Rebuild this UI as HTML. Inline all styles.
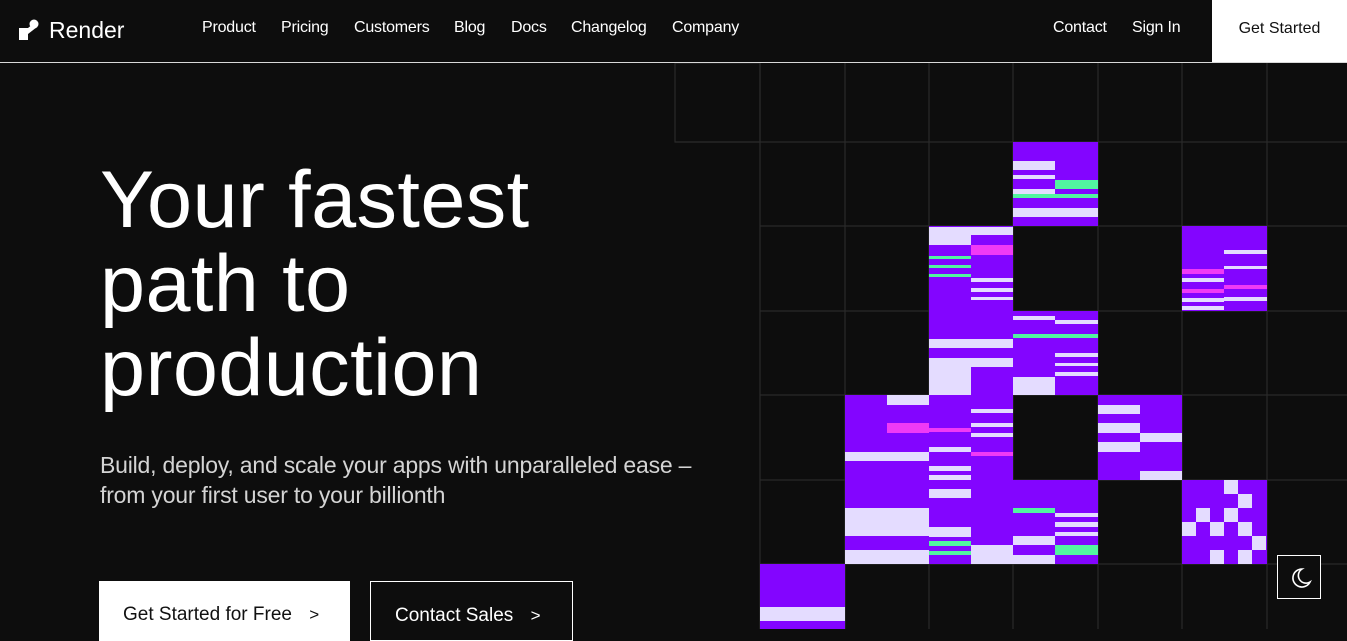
<!DOCTYPE html>
<html><head><meta charset="utf-8"><style>
*{margin:0;padding:0;box-sizing:border-box}
html,body{width:1347px;height:629px;overflow:hidden;background:#0d0d0d;font-family:"Liberation Sans",sans-serif;color:#fff}
.nav{position:absolute;left:0;top:0;width:1347px;height:63px;border-bottom:1px solid #d8d8d8;background:#0d0d0d;z-index:3}
.nav a{position:absolute;top:19px;font-size:16px;color:#fff;text-decoration:none;letter-spacing:-0.2px}
.logo{position:absolute;left:19px;top:17px;font-size:23px}
.gs{position:absolute;left:1212px;top:0;width:135px;height:62px;background:#fff;color:#111;font-size:16px;text-align:center;line-height:57px}
h1{position:absolute;left:100px;top:158px;font-size:81px;font-weight:400;line-height:84px;letter-spacing:0.4px}
p{position:absolute;left:100px;top:450px;font-size:23px;line-height:30px;color:#d4d4d4;letter-spacing:-0.2px}
.b1{position:absolute;left:99px;top:581px;width:251px;height:60px;background:#fff;color:#111;font-size:19px;padding:23px 0 0 24px}
.b2{position:absolute;left:370px;top:581px;width:203px;height:60px;border:1px solid #fff;color:#fff;font-size:19px;padding:23px 0 0 24px}
.moon{position:absolute;left:1277px;top:555px;width:44px;height:44px;border:1px solid #fff;background:#0d0d0d}
</style></head><body>
<svg width="1347" height="629" style="position:absolute;left:0;top:0">
<g stroke="#2a2a2a" stroke-width="1.2" fill="none">
<rect x="675" y="63" width="85" height="79"/>
<line x1="760" y1="63" x2="760" y2="629"/><line x1="845" y1="63" x2="845" y2="629"/><line x1="929" y1="63" x2="929" y2="629"/><line x1="1013" y1="63" x2="1013" y2="629"/><line x1="1098" y1="63" x2="1098" y2="629"/><line x1="1182" y1="63" x2="1182" y2="629"/><line x1="1267" y1="63" x2="1267" y2="629"/>
<line x1="675" y1="142" x2="1347" y2="142"/><line x1="760" y1="226" x2="1347" y2="226"/><line x1="760" y1="311" x2="1347" y2="311"/><line x1="760" y1="395" x2="1347" y2="395"/><line x1="760" y1="480" x2="1347" y2="480"/><line x1="760" y1="564" x2="1347" y2="564"/>
</g>
<g fill="#8305ff">
<rect x="1013" y="142" width="85" height="84"/>
<rect x="929" y="226" width="84" height="169"/><rect x="1182" y="226" width="85" height="85"/>
<rect x="1013" y="311" width="85" height="84"/>
<rect x="845" y="395" width="168" height="169"/><rect x="1098" y="395" width="84" height="85"/>
<rect x="1013" y="480" width="85" height="84"/><rect x="1182" y="480" width="85" height="84"/>
<rect x="760" y="564" width="85" height="65"/>
</g>
<g fill="#e4dcff">
<rect x="1013" y="161" width="42" height="9"/><rect x="1013" y="175" width="42" height="4"/><rect x="1013" y="189" width="42" height="5"/><rect x="1013" y="208" width="85" height="9"/>
<rect x="929" y="227" width="84" height="8"/><rect x="929" y="235" width="42" height="10"/>
<rect x="971" y="278" width="42" height="4"/><rect x="971" y="288" width="42" height="4"/><rect x="971" y="297" width="42" height="3"/>
<rect x="929" y="339" width="84" height="9"/><rect x="929" y="358" width="84" height="9"/><rect x="929" y="367" width="42" height="28"/>
<rect x="1013" y="316" width="42" height="4"/><rect x="1055" y="320" width="43" height="4"/><rect x="1055" y="353" width="43" height="4"/><rect x="1055" y="363" width="43" height="3"/><rect x="1055" y="372" width="43" height="4"/><rect x="1013" y="377" width="42" height="18"/>
<rect x="1224" y="250" width="43" height="4"/><rect x="1224" y="266" width="43" height="3"/><rect x="1182" y="278" width="42" height="4"/><rect x="1224" y="297" width="43" height="4"/><rect x="1182" y="298" width="42" height="4"/><rect x="1182" y="306" width="42" height="4"/>
<rect x="887" y="395" width="42" height="10"/><rect x="845" y="452" width="84" height="9"/>
<rect x="971" y="409" width="42" height="4"/><rect x="971" y="423" width="42" height="4"/><rect x="971" y="433" width="42" height="4"/>
<rect x="929" y="447" width="42" height="5"/><rect x="929" y="466" width="42" height="5"/><rect x="929" y="475" width="42" height="5"/>
<rect x="1098" y="405" width="42" height="9"/><rect x="1098" y="423" width="42" height="10"/><rect x="1140" y="433" width="42" height="9"/><rect x="1098" y="442" width="42" height="10"/><rect x="1140" y="471" width="42" height="9"/>
<rect x="845" y="508" width="84" height="28"/><rect x="845" y="550" width="84" height="14"/>
<rect x="929" y="489" width="42" height="9"/><rect x="929" y="527" width="42" height="10"/><rect x="971" y="545" width="42" height="19"/>
<rect x="1055" y="513" width="43" height="4"/><rect x="1055" y="522" width="43" height="5"/><rect x="1055" y="532" width="43" height="4"/><rect x="1013" y="536" width="42" height="9"/><rect x="1013" y="555" width="42" height="9"/>
<rect x="1224" y="480" width="14" height="14"/><rect x="1238" y="494" width="14" height="14"/><rect x="1196" y="508" width="14" height="14"/><rect x="1224" y="508" width="14" height="14"/><rect x="1182" y="522" width="14" height="14"/><rect x="1210" y="522" width="14" height="14"/><rect x="1238" y="522" width="14" height="14"/><rect x="1252" y="536" width="14" height="14"/><rect x="1210" y="550" width="14" height="14"/><rect x="1238" y="550" width="14" height="14"/>
<rect x="760" y="607" width="85" height="14"/>
</g>
<g fill="#52f5a0">
<rect x="1055" y="180" width="43" height="9"/><rect x="1013" y="194" width="85" height="4"/>
<rect x="929" y="256" width="42" height="3"/><rect x="929" y="265" width="42" height="3"/><rect x="929" y="274" width="42" height="3"/>
<rect x="1013" y="334" width="85" height="4"/>
<rect x="929" y="541" width="42" height="5"/><rect x="929" y="551" width="42" height="4"/>
<rect x="1013" y="508" width="42" height="5"/><rect x="1055" y="545" width="43" height="10"/>
</g>
<g fill="#f03af5">
<rect x="971" y="245" width="42" height="10"/><rect x="1182" y="269" width="42" height="5"/><rect x="1224" y="285" width="43" height="4"/><rect x="1182" y="289" width="42" height="4"/>
<rect x="887" y="423" width="42" height="10"/><rect x="929" y="428" width="42" height="4"/><rect x="971" y="452" width="42" height="4"/>
</g>
</svg>
<div class="nav">
<div class="logo"><svg width="22" height="22" viewBox="0 0 22 22" style="position:absolute;left:0;top:2px"><circle cx="15" cy="5" r="4.5" fill="#fff"/><path d="M0 9h9v12H0z M9 9 L14 5 L18 8 L9 15z" fill="#fff"/></svg><span style="position:absolute;left:30px;top:0;white-space:nowrap">Render</span></div>
<a style="left:202px">Product</a><a style="left:281px">Pricing</a><a style="left:354px">Customers</a><a style="left:454px">Blog</a><a style="left:511px">Docs</a><a style="left:571px">Changelog</a><a style="left:672px">Company</a>
<a style="left:1053px">Contact</a><a style="left:1132px">Sign In</a>
<div class="gs">Get Started</div>
</div>
<h1>Your fastest<br>path to<br>production</h1>
<p>Build, deploy, and scale your apps with unparalleled ease –<br>from your first user to your billionth</p>
<div class="b1">Get Started for Free <span style="margin-left:12px;font-size:17px">&gt;</span></div>
<div class="b2">Contact Sales <span style="margin-left:12px;font-size:17px">&gt;</span></div>
<div class="moon"><svg width="44" height="44" viewBox="0 0 44 44"><path d="M24 13a9 9 0 1 0 8 13a7 7 0 0 1 -8 -13z" fill="none" stroke="#fff" stroke-width="1.6"/></svg></div>
</body></html>
